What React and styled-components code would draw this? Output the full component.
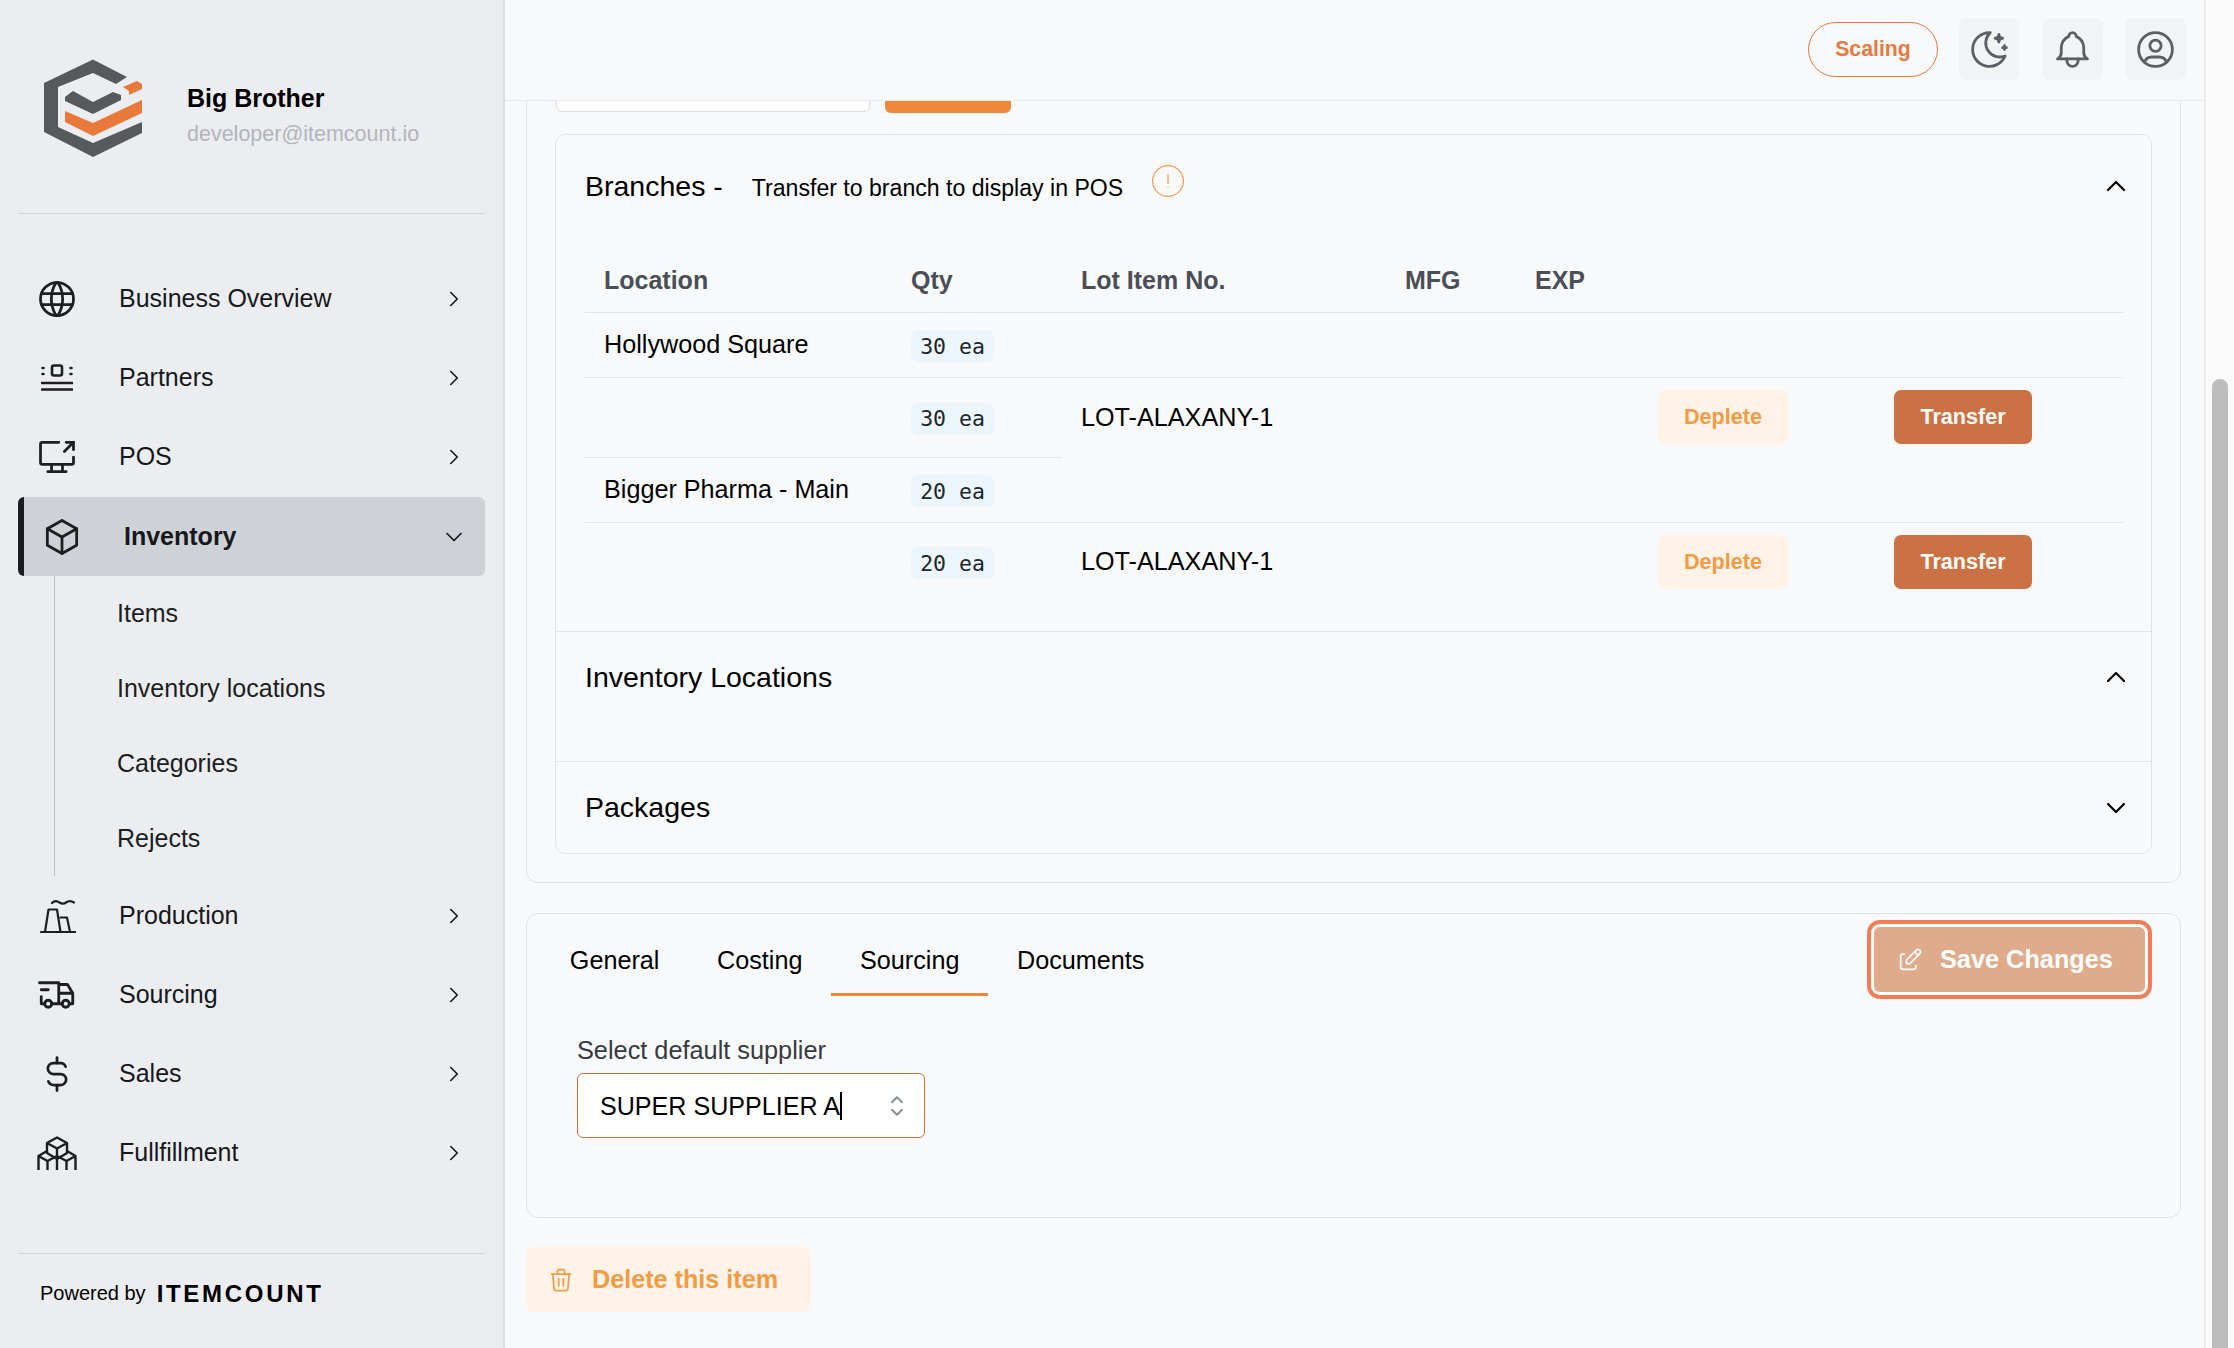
import styled, { createGlobalStyle } from 'styled-components'
import {
  TbWorld, TbScreenShare, TbBox, TbTruckDelivery, TbCurrencyDollar,
  TbChevronRight, TbChevronDown, TbChevronUp, TbMoonStars, TbBell, TbUserCircle,
  TbEdit, TbSelector, TbTrash,
} from 'react-icons/tb'

const GlobalStyle = createGlobalStyle`
  html, body {
    margin: 0;
    height: 100%;
    overflow: hidden;
  }
  body {
    font-family: "Liberation Sans", Arial, sans-serif;
    color: #000;
    background: #f8f9fb;
  }
  * { box-sizing: border-box; }
`

const Page = styled.div`
  display: flex;
  width: 2234px;
  height: 1348px;
`

const Sidebar = styled.aside`
  display: flex;
  flex-direction: column;
  flex: 0 0 505px;
  padding: 0 18px;
  background: #ecedf1;
  border-right: 2px solid #dcdde1;
`

const Brand = styled.div`
  display: flex;
  align-items: center;
  flex: 0 0 214px;
  padding: 6px 0 0 12px;
  border-bottom: 1px solid #d3d6da;
`

const BrandText = styled.div`
  margin: 13px 0 0 37px;
`

const BrandName = styled.div`
  font-size: 25px;
  font-weight: 700;
  line-height: 36px;
`

const BrandMail = styled.div`
  font-size: 21.5px;
  line-height: 36px;
  color: #b2b5ba;
`

const Nav = styled.nav`
  margin-top: 45px;
`

const NavRow = styled.div`
  display: flex;
  align-items: center;
  height: 79px;
  margin-top: ${p => (p.$active ? '1px' : '0')};
  padding-left: ${p => (p.$active ? '20px' : '21px')};
  padding-right: ${p => (p.$active ? '17px' : '18px')};
  font-size: 25px;
  font-weight: ${p => (p.$active ? 700 : 400)};
  color: #16181b;
  border-radius: 6px;
  background: ${p => (p.$active ? '#ced2d6' : 'transparent')};
  border-left: ${p => (p.$active ? '6px solid #1a1c20' : '0')};
  svg { flex: none; }
`

const NavIcon = styled.span`
  display: flex;
  align-items: center;
  justify-content: center;
  width: 36px;
  height: 48px;
  margin-right: 44px;
  color: #1c1e21;
`

const NavLabel = styled.span`
  flex: 1;
`

const SubNav = styled.div`
  margin-left: 36px;
  padding-left: 62px;
  border-left: 1px solid #c0c3c7;
`

const SubItem = styled.div`
  display: flex;
  align-items: center;
  height: 75px;
  font-size: 25px;
  color: #1c1e21;
`

const Footer = styled.div`
  display: flex;
  align-items: center;
  margin-top: auto;
  height: 95px;
  padding: 0 0 15px 22px;
  border-top: 1px solid #d3d6da;
`

const PoweredBy = styled.span`
  font-size: 20px;
  margin-right: 11px;
`

const FooterLogo = styled.span`
  font-size: 24px;
  font-weight: 700;
  letter-spacing: 2.7px;
`

const Main = styled.main`
  display: flex;
  flex-direction: column;
  flex: 1;
  min-width: 0;
`

const Header = styled.header`
  display: flex;
  align-items: flex-start;
  justify-content: flex-end;
  flex: 0 0 101px;
  gap: 22px;
  padding: 18px 18px 0 0;
  border-bottom: 1px solid #e8e9ec;
`

const PlanPill = styled.div`
  display: flex;
  align-items: center;
  justify-content: center;
  width: 130px;
  height: 55px;
  margin: 4px -1px 0 0;
  border: 1px solid #e8793b;
  border-radius: 28px;
  color: #e67a3f;
  font-size: 21.3px;
  font-weight: 700;
`

const IconButton = styled.div`
  display: flex;
  align-items: center;
  justify-content: center;
  width: 61px;
  height: 62px;
  border-radius: 8px;
  background: #f2f3f5;
  color: #5c5f66;
`

const Viewport = styled.div`
  display: flex;
  flex-direction: column;
  justify-content: flex-end;
  flex: 1;
  min-height: 0;
  overflow: hidden;
  padding: 0 23px 36px 21px;
`

const Card = styled.section`
  flex: none;
  border: 1px solid #dfe1e5;
  border-radius: 12px;
  margin-bottom: ${p => p.$gap || 0}px;
`

const ItemCard = styled(Card)`
  padding: 29px 28px 28px;
`

const FormRow = styled.div`
  display: flex;
  align-items: flex-end;
  gap: 15px;
  margin-bottom: 22px;
`

const FormInput = styled.div`
  width: 314px;
  height: 60px;
  margin-left: 1px;
  background: #fff;
  border: 1px solid #dcdee2;
  border-radius: 6px;
`

const FormButton = styled.div`
  width: 126px;
  height: 61px;
  margin-bottom: -1px;
  background: #ee8739;
  border-radius: 6px;
`

const Accordion = styled.div`
  border: 1px solid #e1e3e7;
  border-radius: 10px;
`

const AccordionItem = styled.div`
  & + & { border-top: 1px solid #e3e5e8; }
`

const AccordionHead = styled.div`
  display: flex;
  align-items: center;
  height: ${p => p.$height}px;
  padding: 0 19px 0 29px;
  font-size: 28.5px;
`

const AccordionTitle = styled.span`
  flex: 1;
`

const HeadHint = styled.span`
  margin-left: 29px;
  font-size: 23.1px;
`

const HintBadge = styled.span`
  display: inline-flex;
  align-items: center;
  margin: -14px 0 0 29px;
  vertical-align: middle;
`

const Panel = styled.div`
  padding: ${p => (p.$empty ? '0 0 39px' : '13px 29px 30px')};
`

const StockTable = styled.table`
  width: 100%;
  table-layout: fixed;
  border-collapse: collapse;
  font-size: 25.2px;
`

const Th = styled.th`
  height: 62px;
  padding: 0 0 0 19px;
  text-align: left;
  font-size: 25px;
  font-weight: 700;
  color: #4a4f57;
  border-bottom: 1px solid #e3e5e8;
`

const Td = styled.td`
  height: ${p => p.$height}px;
  padding: 0 0 0 19px;
  border-bottom: ${p => (p.$line ? '1px solid #e3e5e8' : '0')};
`

const QtyChip = styled.code`
  display: inline-flex;
  align-items: center;
  justify-content: center;
  width: 83px;
  height: 32px;
  margin-top: 3px;
  vertical-align: middle;
  background: #edf5fc;
  border-radius: 7px;
  font-family: "DejaVu Sans Mono", monospace;
  font-size: 21.5px;
  color: #212529;
`

const SoftButton = styled.button`
  display: inline-flex;
  align-items: center;
  justify-content: center;
  width: 130px;
  height: 54px;
  padding: 0;
  vertical-align: middle;
  border: 0;
  border-radius: 7px;
  background: #fff3e8;
  color: #f39a44;
  font: 700 21.6px "Liberation Sans", Arial, sans-serif;
`

const SolidButton = styled(SoftButton)`
  width: 138px;
  background: #cb7144;
  color: #fff;
`

const CardHead = styled.div`
  display: flex;
  align-items: flex-start;
  justify-content: space-between;
  padding: 13px 35px 0 14px;
`

const Tabs = styled.div`
  display: flex;
  margin-top: 1px;
`

const Tab = styled.div`
  display: flex;
  align-items: center;
  height: 68px;
  padding: 0 28.8px;
  font-size: 25.2px;
  border-bottom: 3px solid ${p => (p.$active ? '#ee8739' : 'transparent')};
`

const SaveButton = styled.button`
  display: flex;
  align-items: center;
  width: 271px;
  height: 65px;
  padding: 0 0 0 22px;
  border: 0;
  border-radius: 6px;
  background: #e0ab8b;
  color: #fff;
  font: 700 25.3px "Liberation Sans", Arial, sans-serif;
  box-shadow: 0 0 0 3px #fdfdfd, 0 0 0 7px #f47d56;
  span { margin-left: 16px; }
`

const SupplierForm = styled.div`
  padding: 38px 0 79px 50px;
`

const FieldLabel = styled.div`
  font-size: 25.3px;
  line-height: 32px;
  margin-bottom: 7px;
  color: #373a40;
`

const SelectBox = styled.div`
  display: flex;
  align-items: center;
  justify-content: space-between;
  width: 348px;
  height: 65px;
  padding: 0 12px 0 22px;
  background: #fff;
  border: 1px solid #cc7042;
  border-radius: 6px;
  font-size: 25.1px;
  color: #868e96;
`

const SelectValue = styled.span`
  color: #000;
  line-height: 28px;
  border-right: 2px solid #000;
`

const DeleteButton = styled.button`
  display: flex;
  align-items: center;
  flex: none;
  align-self: flex-start;
  width: 285px;
  height: 65px;
  padding: 0 0 0 21px;
  border: 0;
  border-radius: 8px;
  background: #fff3e8;
  color: #f39a44;
  font: 700 25.2px "Liberation Sans", Arial, sans-serif;
  span { margin-left: 17px; }
`

const ScrollTrack = styled.div`
  flex: 0 0 30px;
  padding: 379px 6px 0 6px;
  border-left: 2px solid #ececee;
  background: #fafafb;
`

const ScrollThumb = styled.div`
  height: 100%;
  border-radius: 8px 8px 0 0;
  background: #bdbdbd;
`

const Logo = () => (
  <svg width="120" height="120" viewBox="0 0 120 120">
    <path fill="#58595b" d="M63 9.500 97 27 86 34 63 23 28 37V77L63 93 112 72V83L63 107 14 82V33Z" />
    <path fill="#58595b" d="M35 47 43 41 63 52 83 42 91 45V50L63 64 35 51Z" />
    <path fill="#e8793b" d="M35 61 63 73 112 50V63L63 86 35 72Z" />
    <path fill="#e8793b" d="M93 37 107 31 112 34V39L99 45V41Z" />
  </svg>
)

const PartnersIcon = () => (
  <svg width="32" height="28" viewBox="0 0 32 28" fill="none" stroke="currentColor" strokeWidth="2.6" strokeLinecap="round">
    <rect x="11" y="1.500" width="10" height="10" rx="2" />
    <path d="M1.500 4h1M1.500 10h1M29.500 4h1M29.500 10h1M1 19h30M1 25.500h30" />
  </svg>
)

const ProductionIcon = () => (
  <svg width="38" height="36" viewBox="8 8 38 36" fill="none" stroke="currentColor" strokeWidth="2.2" strokeLinecap="round" strokeLinejoin="round">
    <path d="M11 42h35M15 42 18.500 19.500H27L30.500 42M30.500 27.500H37L40 42" />
    <path d="M22 13c3-3 5-2 7.500-.5s4.500 1.500 6.500 0 5-2 8 0" />
  </svg>
)

// the bottom row of boxes is cut off by the icon's own frame
const FulfillmentIcon = () => (
  <svg width="40" height="34" viewBox="0 0 40 34" fill="none" stroke="currentColor" strokeWidth="2.4" strokeLinejoin="round">
    <path d="M20 1.500 30 7V17L20 23 10 17V7ZM10 7 20 12.500 30 7M20 12.500V34" />
    <path d="M10 15 1.500 20V34M1.500 20 10.500 25 20 20M10.500 25V34" />
    <path d="M30 15 38.500 20V34M38.500 20 29.500 25 20 20M29.500 25V34" />
  </svg>
)

const NoticeIcon = () => (
  <svg width="32" height="32" viewBox="0 0 32 32" fill="none" stroke="#f19a48" strokeWidth="1.2" strokeLinecap="round">
    <circle cx="16" cy="16" r="15.400" />
    <path d="M16 9.500v9M16 22v.4" />
  </svg>
)

const topNav = [
  { label: 'Business Overview', icon: <TbWorld size={44} strokeWidth={1.5} /> },
  { label: 'Partners', icon: <PartnersIcon /> },
  { label: 'POS', icon: <TbScreenShare size={44} strokeWidth={1.5} /> },
]

const bottomNav = [
  { label: 'Production', icon: <ProductionIcon /> },
  { label: 'Sourcing', icon: <TbTruckDelivery size={42} strokeWidth={1.6} /> },
  { label: 'Sales', icon: <TbCurrencyDollar size={44} strokeWidth={1.5} /> },
  { label: 'Fullfillment', icon: <FulfillmentIcon /> },
]

const subNav = ['Items', 'Inventory locations', 'Categories', 'Rejects']

const tabs = ['General', 'Costing', 'Sourcing', 'Documents']

const columns = [307, 170, 324, 130, 123, 236, 248]

const branches = [
  { name: 'Hollywood Square', qty: '30 ea', lot: 'LOT-ALAXANY-1' },
  { name: 'Bigger Pharma - Main', qty: '20 ea', lot: 'LOT-ALAXANY-1' },
]

const NavEntry = ({ item }) => (
  <NavRow>
    <NavIcon>{item.icon}</NavIcon>
    <NavLabel>{item.label}</NavLabel>
    <TbChevronRight size={26} strokeWidth={1.5} />
  </NavRow>
)

const BranchRows = ({ branch, last }) => (
  <>
    <tr>
      <Td $height={65} $line>{branch.name}</Td>
      <Td $line><QtyChip>{branch.qty}</QtyChip></Td>
      <Td $line /><Td $line /><Td $line /><Td $line /><Td $line />
    </tr>
    <tr>
      <Td $height={last ? 79 : 80} $line={!last} />
      <Td $line={!last}><QtyChip>{branch.qty}</QtyChip></Td>
      <Td>{branch.lot}</Td>
      <Td />
      <Td />
      <Td><SoftButton>Deplete</SoftButton></Td>
      <Td><SolidButton>Transfer</SolidButton></Td>
    </tr>
  </>
)

const App = () => {
  return (
    <Page>
      <GlobalStyle />
      <Sidebar>
        <Brand>
          <Logo />
          <BrandText>
            <BrandName>Big Brother</BrandName>
            <BrandMail>developer@itemcount.io</BrandMail>
          </BrandText>
        </Brand>
        <Nav>
          {topNav.map(item => <NavEntry key={item.label} item={item} />)}
          <NavRow $active>
            <NavIcon><TbBox size={44} strokeWidth={1.5} /></NavIcon>
            <NavLabel>Inventory</NavLabel>
            <TbChevronDown size={28} strokeWidth={1.5} />
          </NavRow>
          <SubNav>
            {subNav.map(label => <SubItem key={label}>{label}</SubItem>)}
          </SubNav>
          {bottomNav.map(item => <NavEntry key={item.label} item={item} />)}
        </Nav>
        <Footer>
          <PoweredBy>Powered by</PoweredBy>
          <FooterLogo>ITEMCOUNT</FooterLogo>
        </Footer>
      </Sidebar>

      <Main>
        <Header>
          <PlanPill>Scaling</PlanPill>
          <IconButton><TbMoonStars size={45} strokeWidth={1.5} /></IconButton>
          <IconButton><TbBell size={45} strokeWidth={1.5} /></IconButton>
          <IconButton><TbUserCircle size={45} strokeWidth={1.5} /></IconButton>
        </Header>
        <Viewport>
          <ItemCard $gap={30}>
            <FormRow>
              <FormInput />
              <FormButton />
            </FormRow>
            <Accordion>
              <AccordionItem>
                <AccordionHead $height={102}>
                  <AccordionTitle>
                    Branches -
                    <HeadHint>Transfer to branch to display in POS</HeadHint>
                    <HintBadge><NoticeIcon /></HintBadge>
                  </AccordionTitle>
                  <TbChevronUp size={32} strokeWidth={1.6} />
                </AccordionHead>
                <Panel>
                  <StockTable>
                    <colgroup>
                      {columns.map((w, i) => <col key={i} width={w} />)}
                    </colgroup>
                    <thead>
                      <tr>
                        <Th>Location</Th>
                        <Th>Qty</Th>
                        <Th>Lot Item No.</Th>
                        <Th>MFG</Th>
                        <Th>EXP</Th>
                        <Th />
                        <Th />
                      </tr>
                    </thead>
                    <tbody>
                      {branches.map((b, i) => (
                        <BranchRows key={b.name} branch={b} last={i === branches.length - 1} />
                      ))}
                    </tbody>
                  </StockTable>
                </Panel>
              </AccordionItem>
              <AccordionItem>
                <AccordionHead $height={90}>
                  <AccordionTitle>Inventory Locations</AccordionTitle>
                  <TbChevronUp size={32} strokeWidth={1.6} />
                </AccordionHead>
                <Panel $empty />
              </AccordionItem>
              <AccordionItem>
                <AccordionHead $height={91}>
                  <AccordionTitle>Packages</AccordionTitle>
                  <TbChevronDown size={32} strokeWidth={1.6} />
                </AccordionHead>
              </AccordionItem>
            </Accordion>
          </ItemCard>

          <Card $gap={29}>
            <CardHead>
              <Tabs>
                {tabs.map(t => <Tab key={t} $active={t === 'Sourcing'}>{t}</Tab>)}
              </Tabs>
              <SaveButton><TbEdit size={28} strokeWidth={1.5} /><span>Save Changes</span></SaveButton>
            </CardHead>
            <SupplierForm>
              <FieldLabel>Select default supplier</FieldLabel>
              <SelectBox>
                <SelectValue>SUPER SUPPLIER A</SelectValue>
                <TbSelector size={30} strokeWidth={1.5} />
              </SelectBox>
            </SupplierForm>
          </Card>

          <DeleteButton><TbTrash size={28} strokeWidth={1.5} /><span>Delete this item</span></DeleteButton>
        </Viewport>
      </Main>

      <ScrollTrack><ScrollThumb /></ScrollTrack>
    </Page>
  )
}

export default App
